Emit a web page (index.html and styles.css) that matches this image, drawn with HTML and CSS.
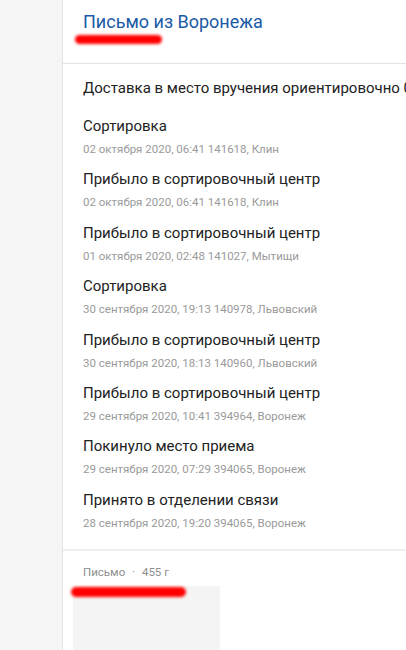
FILE: index.html
```html
<!DOCTYPE html>
<html lang="ru">
<head>
<meta charset="utf-8">
<link rel="stylesheet" href="styles.css">
</head>
<body>
<div class="page">
  <div class="side"></div>
  <div class="panel">
    <div class="head">
      <div class="title">Письмо из Воронежа</div>
      <div class="scribble s1"></div>
    </div>
    <div class="list">
      <div class="lead">Доставка в место вручения ориентировочно 05 октября</div>
      <div class="item"><div class="name">Сортировка</div><div class="date">02 октября 2020, 06:41 141618, Клин</div></div>
      <div class="item"><div class="name">Прибыло в сортировочный центр</div><div class="date">02 октября 2020, 06:41 141618, Клин</div></div>
      <div class="item"><div class="name">Прибыло в сортировочный центр</div><div class="date">01 октября 2020, 02:48 141027, Мытищи</div></div>
      <div class="item"><div class="name">Сортировка</div><div class="date">30 сентября 2020, 19:13 140978, Львовский</div></div>
      <div class="item"><div class="name">Прибыло в сортировочный центр</div><div class="date">30 сентября 2020, 18:13 140960, Львовский</div></div>
      <div class="item"><div class="name">Прибыло в сортировочный центр</div><div class="date">29 сентября 2020, 10:41 394964, Воронеж</div></div>
      <div class="item"><div class="name">Покинуло место приема</div><div class="date">29 сентября 2020, 07:29 394065, Воронеж</div></div>
      <div class="item"><div class="name">Принято в отделении связи</div><div class="date">28 сентября 2020, 19:20 394065, Воронеж</div></div>
    </div>
    <div class="foot">
      <div class="meta">Письмо <span class="dot">·</span> 455 г</div>
      <div class="box"></div>
      <div class="scribble s2"></div>
    </div>
  </div>
</div>
</body>
</html>
```
FILE: styles.css
```css
html, body { margin: 0; padding: 0; }
body {
  font-family: Roboto, "Noto Sans", sans-serif;
  background: #fff;
  width: 406px;
  height: 650px;
  overflow: hidden;
}
.page { display: flex; height: 650px; }
.side { width: 62px; flex: none; background: #f5f5f5; border-right: 1px solid #e2e2e2; }
.panel { flex: 1; min-width: 0; overflow: hidden; background: #fff; }
.head {
  position: relative;
  height: 64px;
  border-bottom: 1px solid #e4e4e4;
  padding: 10px 0 0 20px;
  box-sizing: border-box;
}
.title { color: #1a5aa6; font-size: 18px; line-height: 24px; white-space: nowrap; }
.scribble {
  position: absolute;
  background: #f00;
  border-radius: 6px;
  filter: blur(1.5px);
}
.s1 { left: 12px; top: 35px; width: 87px; height: 9px; }
.list { padding: 14px 0 6px 20px; border-bottom: 2px solid #eeeeee; }
.lead { font-size: 15px; line-height: 20px; color: #222; white-space: nowrap; margin-bottom: 18px; }
.item { margin-bottom: 12.4px; }
.name { font-size: 15px; line-height: 20px; color: #222; white-space: nowrap; }
.date { font-size: 11.5px; line-height: 16px; color: #9a9a9a; margin-top: 5px; white-space: nowrap; }
.foot { position: relative; padding: 13px 0 0 20px; height: 100px; border-bottom: 1px solid #e2e2e2; }
.meta { font-size: 11.5px; line-height: 16px; color: #8e8e8e; }
.dot { margin: 0 4px; }
.box { margin: 6px 0 0 -10px; width: 147px; height: 70px; background: #f4f4f4; }
.s2 { left: 8px; top: 36px; width: 115px; height: 10px; }
```
